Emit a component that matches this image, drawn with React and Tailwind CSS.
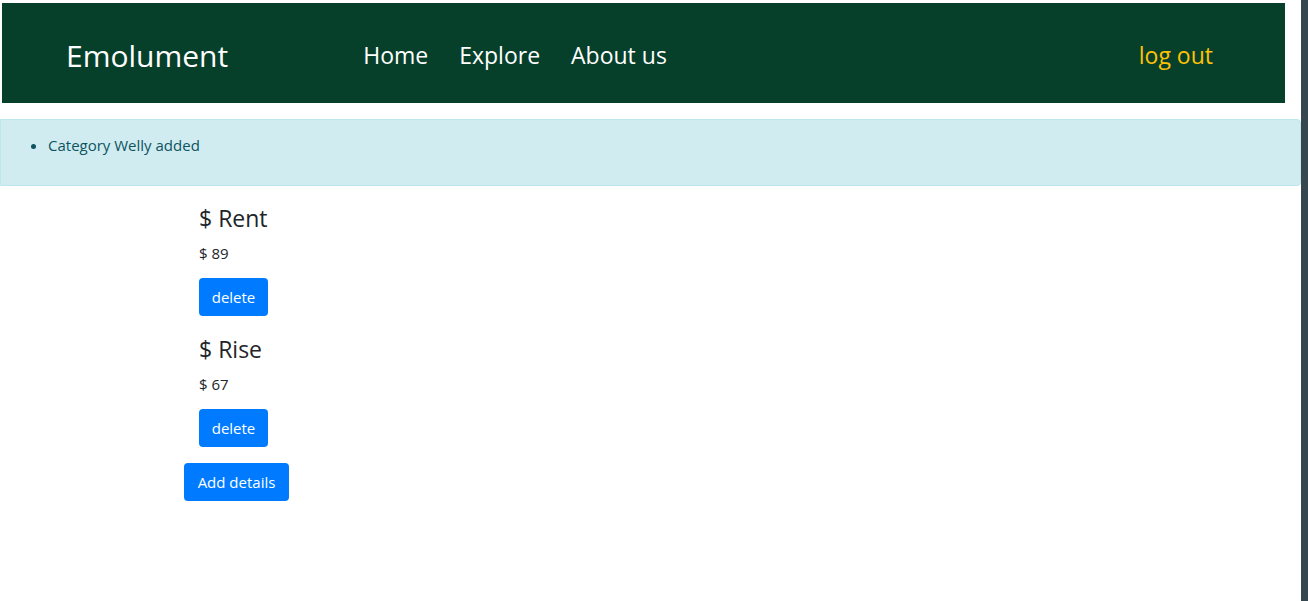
export default function App() {
  const items = [
    { name: "Rent", amount: 89 },
    { name: "Rise", amount: 67 },
  ];
  return (
    <div className="flex h-[601px] w-[1308px] overflow-hidden bg-white" style={{ fontFamily: '"Open Sans", "Noto Sans", sans-serif' }}>
      <div className="flex w-[1301px] flex-col">
        <nav className="ml-[2px] mt-[3px] flex h-[100px] w-[1283px] items-center bg-[#06402b] pt-[5px]">
          <span className="ml-[64px] text-[30px] leading-none text-white">Emolument</span>
          <div className="ml-[135px] flex gap-[31px] text-[23px] leading-none text-white">
            <span>Home</span>
            <span>Explore</span>
            <span>About us</span>
          </div>
          <span className="ml-auto mr-[72px] text-[23px] leading-none text-[#ffc107]">log out</span>
        </nav>
        <div className="mt-[16px] h-[67px] rounded-r border border-[#bee5eb] bg-[#d1ecf1] pl-[46px] pt-[14px] text-[15px] text-[#0c5460]">
          <ul className="list-disc pl-[1px]">
            <li>Category Welly added</li>
          </ul>
        </div>
        <div className="ml-[184px] mt-[14px] flex flex-col items-start text-[#212529]">
          {items.map((it) => (
            <div key={it.name} className="ml-[15px] flex flex-col items-start">
              <h3 className="text-[23px] leading-[36px]">$ {it.name}</h3>
              <p className="mt-[5px] text-[15px] leading-[24px]">$ {it.amount}</p>
              <button className="mt-[13px] h-[38px] w-[69px] rounded bg-[#007bff] text-[15px] text-white">delete</button>
              <div className="h-[15px]" />
            </div>
          ))}
          <button className="mt-[1px] h-[38px] w-[105px] rounded bg-[#007bff] text-[15px] text-white">Add details</button>
        </div>
      </div>
      <div className="w-[7px] bg-[#37474f]" />
    </div>
  );
}
